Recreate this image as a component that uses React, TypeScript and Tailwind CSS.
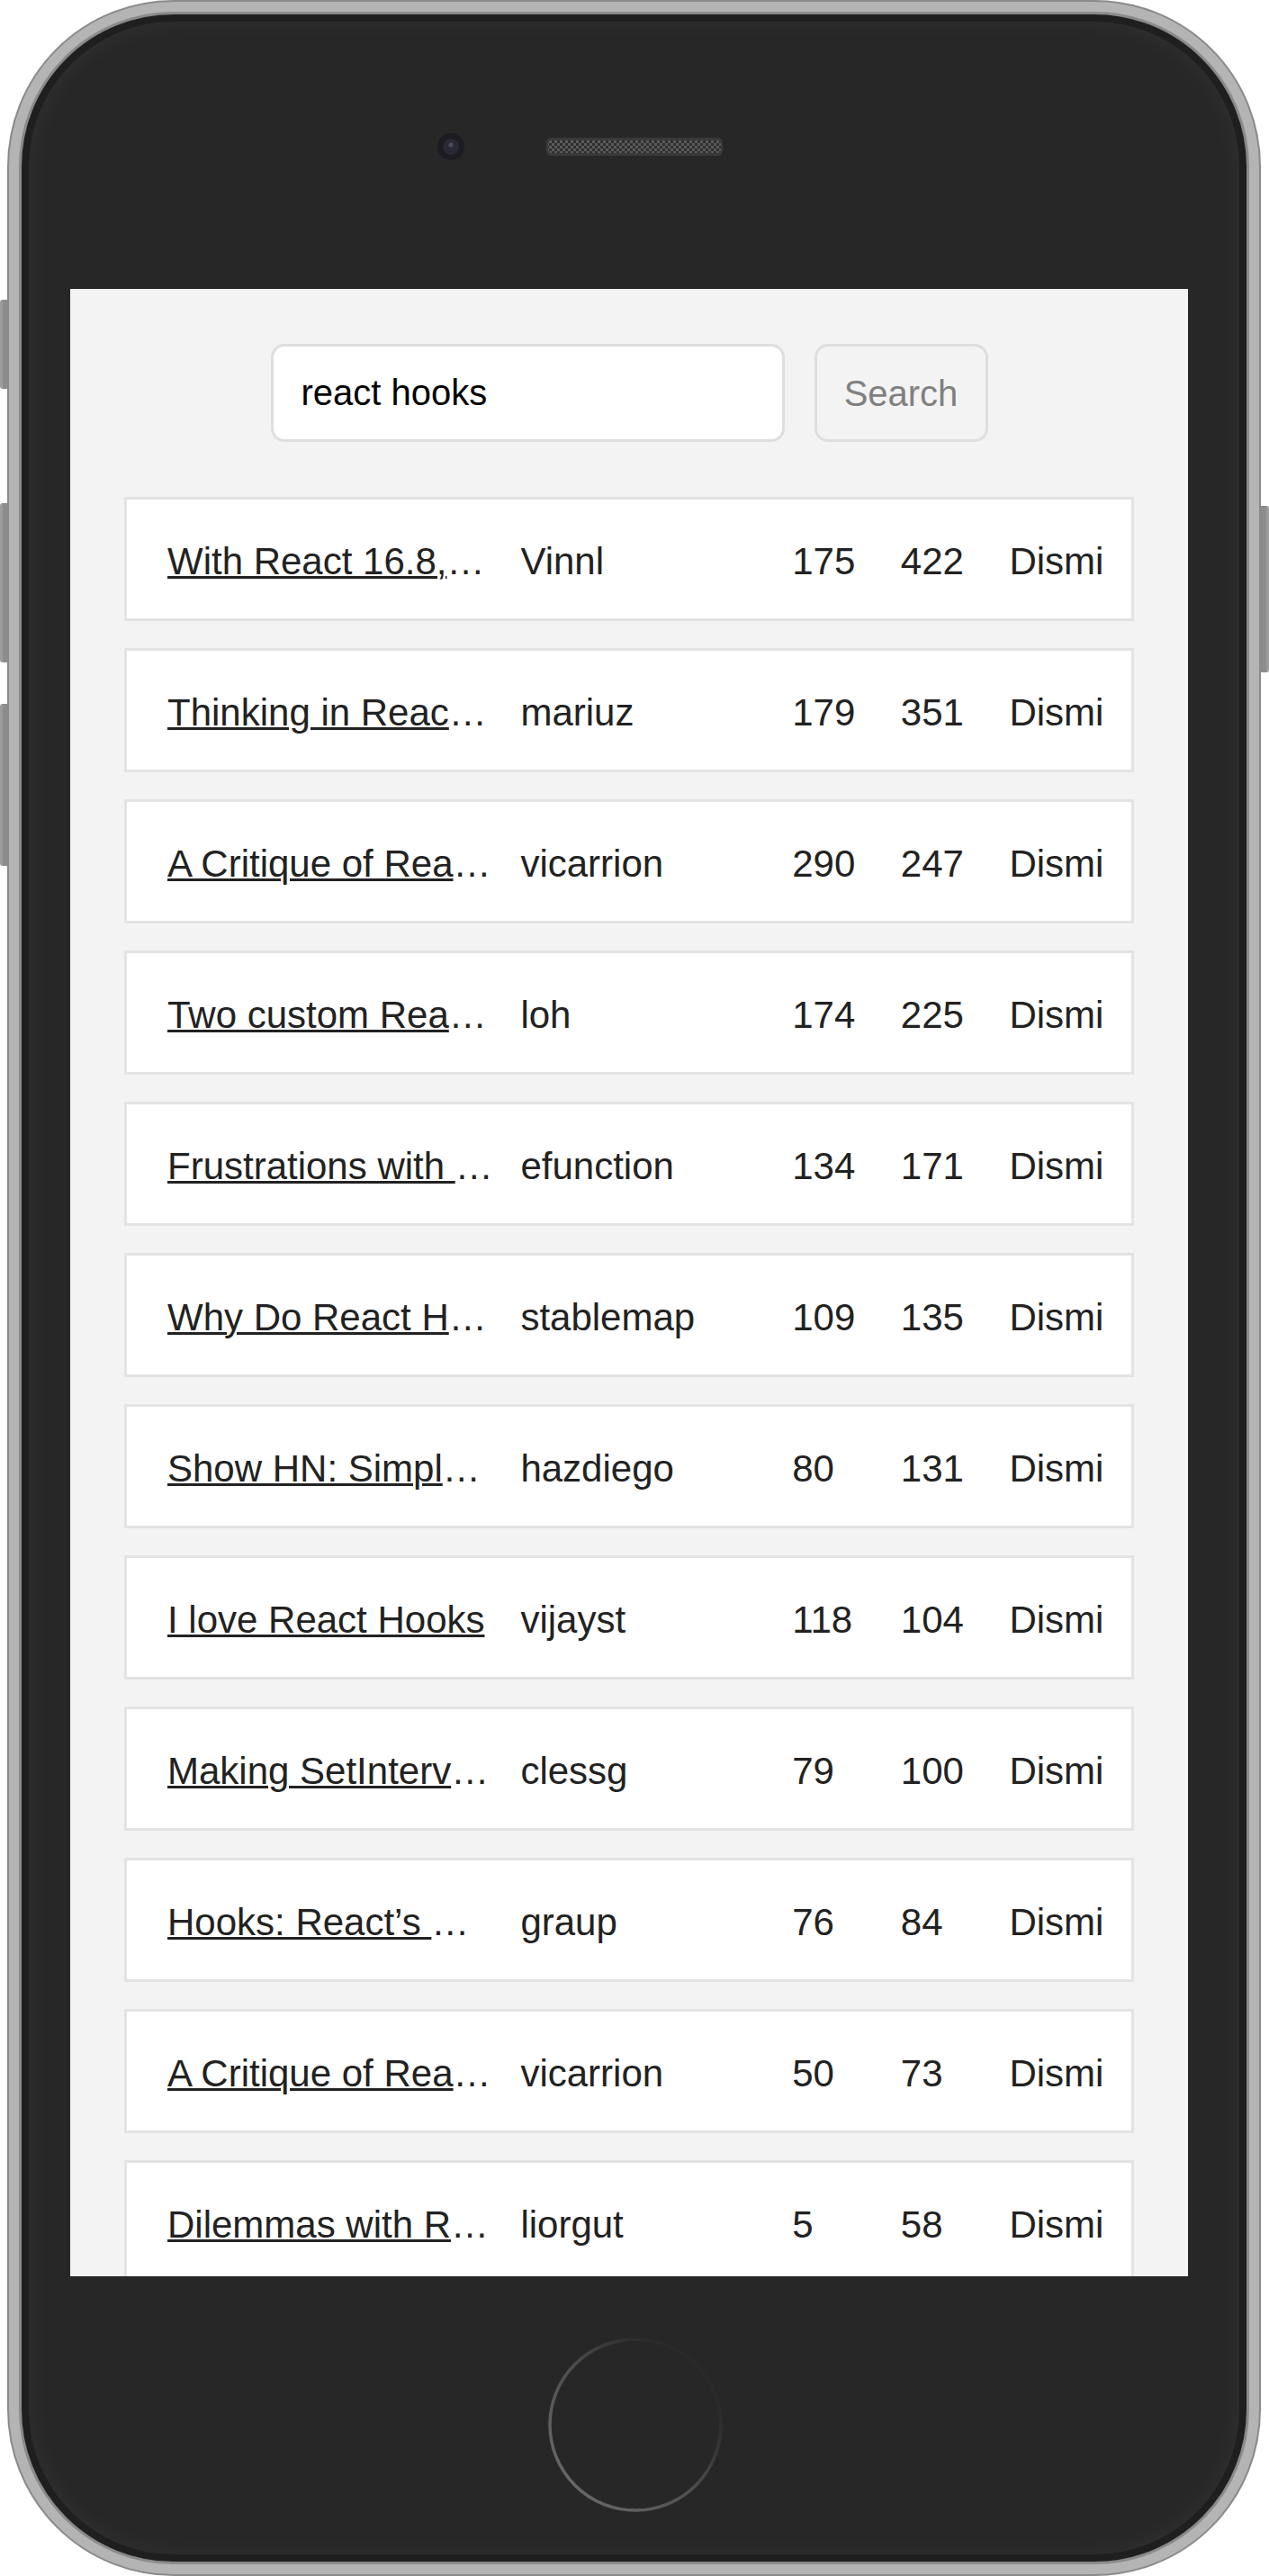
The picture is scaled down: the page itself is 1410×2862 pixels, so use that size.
import React from 'react';

const stories = [
  { title: 'With React 16.8, React Hooks are available in a stable release', author: 'Vinnl', comments: 175, points: 422 },
  { title: 'Thinking in React Hooks', author: 'mariuz', comments: 179, points: 351 },
  { title: 'A Critique of React Hooks', author: 'vicarrion', comments: 290, points: 247 },
  { title: 'Two custom React Hooks for data fetching', author: 'loh', comments: 174, points: 225 },
  { title: 'Frustrations with React Hooks', author: 'efunction', comments: 134, points: 171 },
  { title: 'Why Do React Hooks Rely on Call Order?', author: 'stablemap', comments: 109, points: 135 },
  { title: 'Show HN: Simple state management with React Hooks', author: 'hazdiego', comments: 80, points: 131 },
  { title: 'I love React Hooks', author: 'vijayst', comments: 118, points: 104 },
  { title: 'Making SetInterval Declarative with React Hooks', author: 'clessg', comments: 79, points: 100 },
  { title: 'Hooks: React\u2019s Way to Share Stateful Logic', author: 'graup', comments: 76, points: 84 },
  { title: 'A Critique of React Hooks Addendum', author: 'vicarrion', comments: 50, points: 73 },
  { title: 'Dilemmas with React Hooks', author: 'liorgut', comments: 5, points: 58 },
];

const Speaker = () => (
  <svg width="196" height="20" viewBox="0 0 196 20">
    <defs>
      <pattern id="grill" width="6" height="6" patternUnits="userSpaceOnUse">
        <rect width="6" height="6" fill="#2f2f2f" />
        <rect x="0" y="0" width="3" height="3" fill="#5a5a5a" />
        <rect x="3" y="3" width="3" height="3" fill="#5a5a5a" />
      </pattern>
    </defs>
    <rect x="0" y="0" width="196" height="20" rx="5" fill="#3a3a3a" />
    <rect x="2" y="3" width="192" height="14" rx="4" fill="url(#grill)" />
  </svg>
);

const Camera = () => (
  <svg width="30" height="30" viewBox="0 0 30 30">
    <circle cx="15" cy="15" r="15" fill="#1c1c22" />
    <circle cx="15" cy="15" r="9" fill="#2a2a34" />
    <circle cx="15" cy="13" r="2.5" fill="#4d4d5e" />
  </svg>
);

const HomeButton = () => (
  <svg width="196" height="198" viewBox="0 0 196 198">
    <defs>
      <linearGradient id="ring" x1="0" y1="0.9" x2="0.9" y2="0">
        <stop offset="0" stopColor="#6e6e6e" />
        <stop offset="0.5" stopColor="#4c4c4c" />
        <stop offset="0.8" stopColor="#2c2c2c" />
        <stop offset="1" stopColor="#262626" />
      </linearGradient>
    </defs>
    <circle cx="98" cy="99" r="95" fill="none" stroke="url(#ring)" strokeWidth="3.5" />
  </svg>
);

function StoryRow({ item }: { item: (typeof stories)[number] }) {
  return (
    <div className="flex items-center bg-white border-[3px] border-[#e3e3e3] px-[30px] pt-[33px] pb-[27px] leading-[72px] whitespace-nowrap text-[42px] text-[#222]">
      <span className="w-[392.4px] shrink-0 px-[15px] overflow-hidden text-ellipsis">
        <a href="#" className="underline decoration-[3px]">{item.title}</a>
      </span>
      <span className="w-[301.8px] shrink-0 px-[15px] overflow-hidden text-ellipsis">{item.author}</span>
      <span className="w-[120.6px] shrink-0 px-[15px] overflow-hidden text-ellipsis">{item.comments}</span>
      <span className="w-[120.6px] shrink-0 px-[15px] overflow-hidden text-ellipsis">{item.points}</span>
      <span className="w-[120.6px] shrink-0 px-[15px] overflow-hidden">
        <button type="button" className="leading-[72px]">Dismiss</button>
      </span>
    </div>
  );
}

export default function App() {
  return (
    <div className="relative w-[1410px] h-[2862px] bg-white overflow-hidden" style={{ fontFamily: '"Liberation Sans", Arial, sans-serif' }}>
      {/* side buttons */}
      <div className="absolute left-0 top-[333px] w-[12px] h-[99px] rounded-l-[3px] bg-[#8c8c8c] border-l-[3px] border-[#9c9c9c]" />
      <div className="absolute left-0 top-[559px] w-[12px] h-[177px] rounded-l-[3px] bg-[#8c8c8c] border-l-[3px] border-[#9c9c9c]" />
      <div className="absolute left-0 top-[782px] w-[12px] h-[180px] rounded-l-[3px] bg-[#8c8c8c] border-l-[3px] border-[#9c9c9c]" />
      <div className="absolute right-0 top-[562px] w-[14px] h-[185px] rounded-r-[3px] bg-[#8c8c8c] border-r-[3px] border-[#9c9c9c]" />

      <div className="relative ml-[8px] w-[1393px] h-[2862px] rounded-[185px] border-[2px] border-[#8a8a8a] bg-[#b4b4b4] p-[11px]">
        <div className="w-full h-full rounded-[172px] border-[3px] border-[#8a8a8a] bg-[#272727] shadow-[inset_0_0_0_8px_#1f1f1f,inset_0_0_40px_rgba(255,255,255,0.07)] flex flex-col">
          {/* top bezel */}
          <div className="h-[305px] shrink-0 pt-[132px] pl-[462px] flex items-start">
            <div className="flex items-center gap-[91px]">
              <Camera />
              <Speaker />
            </div>
          </div>

          {/* screen */}
          <div className="ml-[54px] w-[1242px] h-[2208px] shrink-0 bg-[#f3f3f3] overflow-hidden">
            <form className="flex justify-center gap-[33px] pt-[61px]" onSubmit={(e) => e.preventDefault()}>
              <input
                type="text"
                defaultValue="react hooks"
                className="w-[571px] h-[109px] bg-white border-[3px] border-[#dedede] rounded-[15px] px-[31px] text-[40px] text-black outline-none"
              />
              <button type="submit" className="w-[193px] h-[109px] border-[3px] border-[#dedede] rounded-[15px] text-[40px] text-[#808080] bg-[#f3f3f3]">
                Search
              </button>
            </form>

            <div className="mt-[61px] mx-[60px] flex flex-col gap-[30px]">
              {stories.map((item, i) => (
                <StoryRow key={i} item={item} />
              ))}
            </div>
          </div>

          {/* home button */}
          <div className="mt-[66px] ml-[584px]">
            <HomeButton />
          </div>
        </div>
      </div>
    </div>
  );
}
